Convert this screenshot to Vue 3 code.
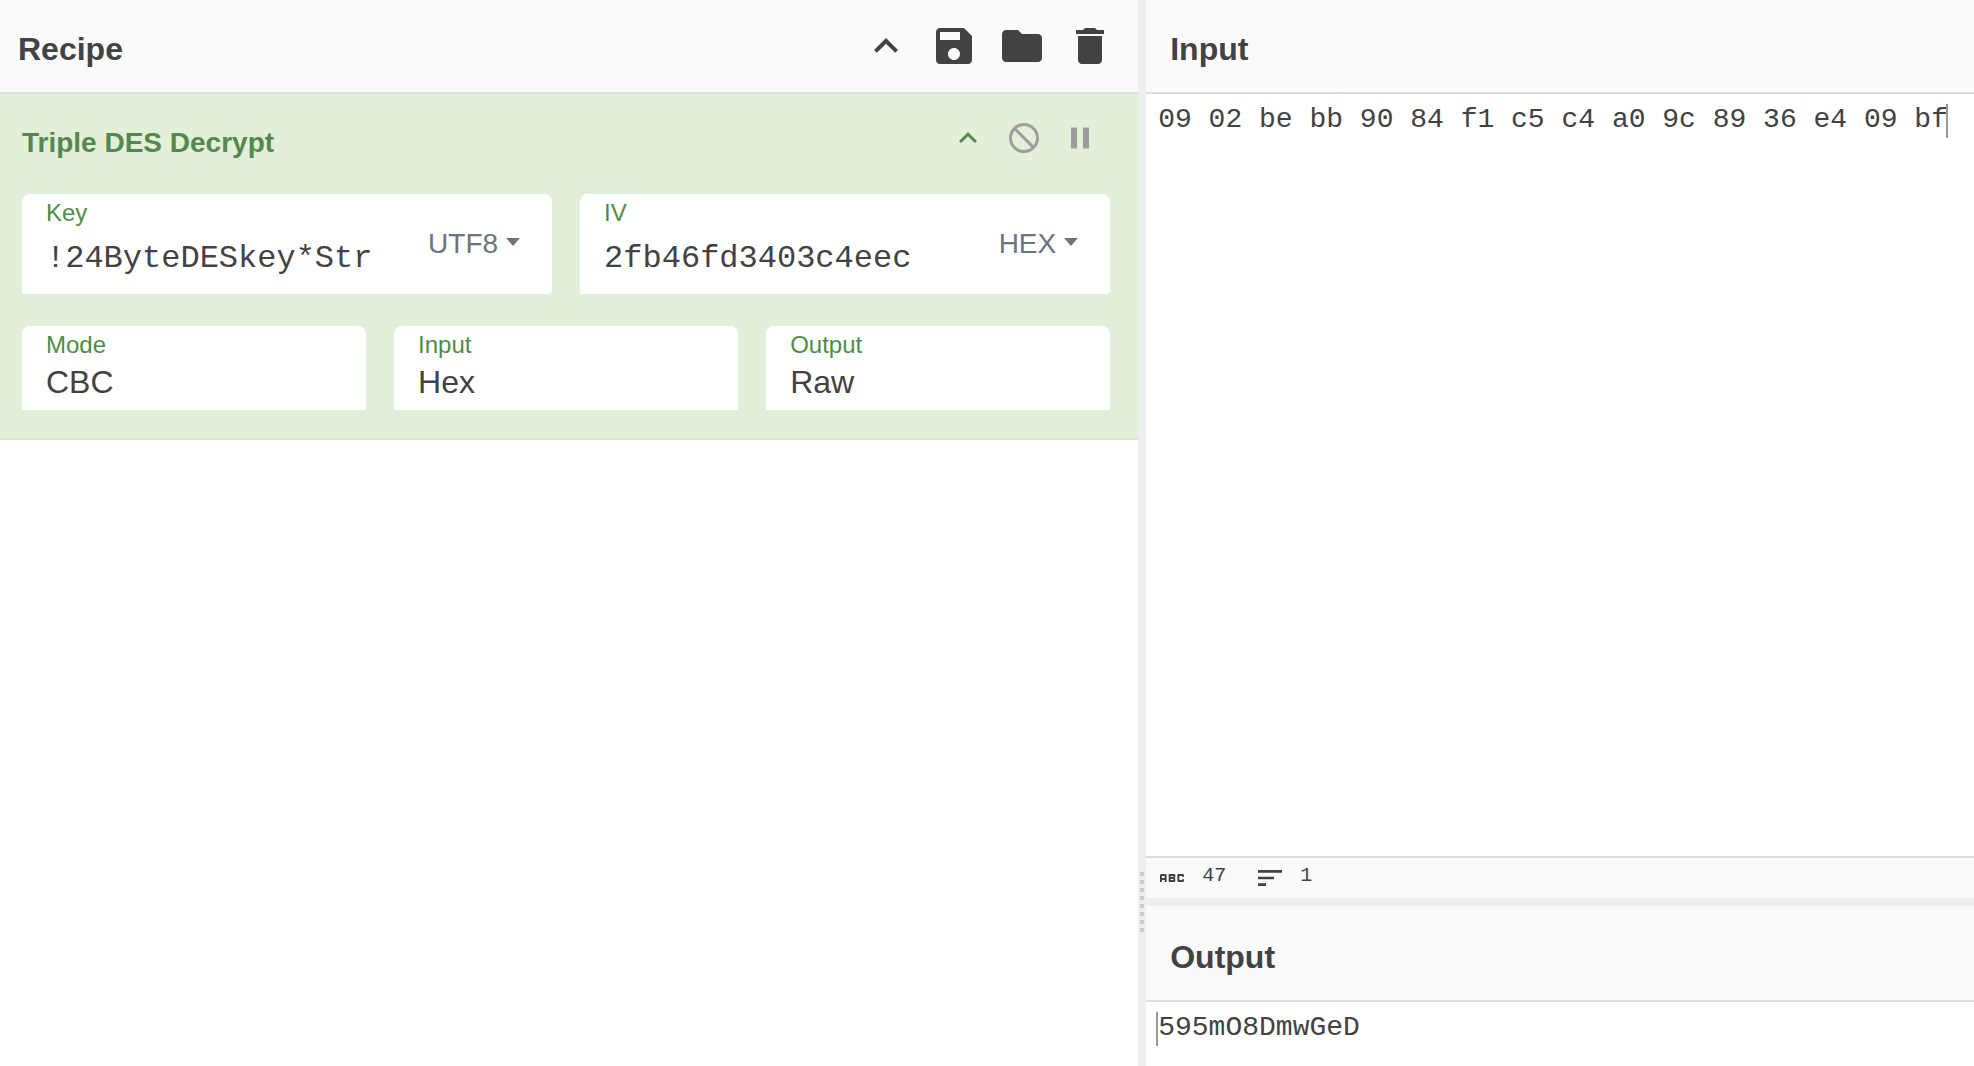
<script setup>
import { ref } from 'vue'

const recipeIcons = [
  { label: 'Hide arguments', d: 'M7.41 15.41 12 10.83l4.59 4.58L18 14l-6-6-6 6z' },
  { label: 'Save recipe', d: 'M17 3H5c-1.11 0-2 .9-2 2v14c0 1.1.89 2 2 2h14c1.1 0 2-.9 2-2V7l-4-4zm-5 16c-1.66 0-3-1.34-3-3s1.34-3 3-3 3 1.34 3 3-1.34 3-3 3zm3-10H5V5h10v4z' },
  { label: 'Load recipe', d: 'M10 4H4c-1.1 0-1.99.9-1.99 2L2 18c0 1.1.9 2 2 2h16c1.1 0 2-.9 2-2V8c0-1.1-.9-2-2-2h-8l-2-2z' },
  { label: 'Clear recipe', d: 'M6 19c0 1.1.9 2 2 2h8c1.1 0 2-.9 2-2V7H6v12zM19 4h-3.5l-1-1h-5l-1 1H5v2h14V4z' },
]

const operationIcons = [
  { label: 'Hide operation arguments', active: true, d: 'M7.41 15.41 12 10.83l4.59 4.58L18 14l-6-6-6 6z' },
  { label: 'Disable operation', d: 'M12 2C6.48 2 2 6.48 2 12s4.48 10 10 10 10-4.48 10-10S17.52 2 12 2zm0 18c-4.42 0-8-3.58-8-8 0-1.85.63-3.55 1.69-4.9L16.9 18.31C15.55 19.37 13.85 20 12 20zm6.31-3.1L7.1 5.69C8.45 4.63 10.15 4 12 4c4.42 0 8 3.58 8 8 0 1.85-.63 3.55-1.69 4.9z' },
  { label: 'Set breakpoint', d: 'M6 19h4V5H6v14zm8-14v14h4V5h-4z' },
]

const textArgs = ref([
  { id: 'key', label: 'Key', value: '!24ByteDESkey*Str', format: 'UTF8' },
  { id: 'iv', label: 'IV', value: '2fb46fd3403c4eec', format: 'HEX' },
])

const selectArgs = ref([
  { id: 'mode', label: 'Mode', value: 'CBC', options: ['CBC', 'ECB'] },
  { id: 'input-format', label: 'Input', value: 'Hex', options: ['Hex', 'Raw'] },
  { id: 'output-format', label: 'Output', value: 'Raw', options: ['Raw', 'Hex'] },
])

const input = ref('09 02 be bb 90 84 f1 c5 c4 a0 9c 89 36 e4 09 bf')
const output = ref('595mO8DmwGeD')

const stats = [
  { label: 'Length', value: 47, d: 'M21 11h-1.5v-.5h-2v3h2V13H21v1c0 .55-.45 1-1 1h-3c-.55 0-1-.45-1-1v-4c0-.55.45-1 1-1h3c.55 0 1 .45 1 1v1zM8 10v5H6.5v-1.5h-2V15H3v-5c0-.55.45-1 1-1h3c.55 0 1 .45 1 1zm-1.5.5h-2V12h2v-1.5zM13.5 12c.55 0 1 .45 1 1v1c0 .55-.45 1-1 1h-4V9h4c.55 0 1 .45 1 1v1c0 .55-.45 1-1 1zM11 10.5v.75h2v-.75h-2zm2 2.25h-2v.75h2v-.75z' },
  { label: 'Lines', value: 1, d: 'M3 18h6v-2H3v2zM3 6v2h18V6H3zm0 7h12v-2H3v2z' },
]
</script>

<template>
  <main class="workspace">
    <section class="recipe">
      <header class="title-bar recipe-title">
        <h2>Recipe</h2>
        <div class="controls">
          <button v-for="icon in recipeIcons" :key="icon.label" type="button" :aria-label="icon.label">
            <svg class="icon-large" viewBox="0 0 24 24" aria-hidden="true"><path :d="icon.d" /></svg>
          </button>
        </div>
      </header>

      <article class="operation">
        <div class="operation-head">
          <h3>Triple DES Decrypt</h3>
          <div class="controls">
            <button
              v-for="icon in operationIcons"
              :key="icon.label"
              type="button"
              :aria-label="icon.label"
              :class="{ active: icon.active }"
            >
              <svg class="icon-medium" viewBox="0 0 24 24" aria-hidden="true"><path :d="icon.d" /></svg>
            </button>
          </div>
        </div>

        <div class="arg-row">
          <div v-for="arg in textArgs" :key="arg.id" class="arg text-arg">
            <div class="field">
              <label :for="arg.id">{{ arg.label }}</label>
              <input :id="arg.id" v-model="arg.value" type="text" spellcheck="false" />
            </div>
            <button type="button" class="format">{{ arg.format }}<span class="caret"></span></button>
          </div>
        </div>

        <div class="arg-row">
          <div v-for="arg in selectArgs" :key="arg.id" class="arg select-arg">
            <label :for="arg.id">{{ arg.label }}</label>
            <select :id="arg.id" v-model="arg.value">
              <option v-for="option in arg.options" :key="option">{{ option }}</option>
            </select>
          </div>
        </div>
      </article>
    </section>

    <div class="gutter gutter-vertical"><span class="grip"></span></div>

    <div class="io">
      <section class="io-input">
        <header class="title-bar io-title"><h2><label for="input-text">Input</label></h2></header>
        <div class="editor">
          <textarea id="input-text" v-model="input" spellcheck="false"></textarea>
          <span class="cursor cursor-end"></span>
        </div>
        <footer class="status">
          <span v-for="stat in stats" :key="stat.label" class="stat" :title="stat.label">
            <svg class="icon-small" viewBox="0 0 24 24" aria-hidden="true"><path :d="stat.d" /></svg>
            <span>{{ stat.value }}</span>
          </span>
        </footer>
      </section>
      <div class="gutter gutter-horizontal"></div>
      <section class="io-output">
        <header class="title-bar io-title"><h2><label for="output-text">Output</label></h2></header>
        <div class="editor">
          <textarea id="output-text" v-model="output" rows="1" readonly spellcheck="false"></textarea>
          <span class="cursor cursor-start"></span>
        </div>
      </section>
    </div>
  </main>
</template>

<style>
body {
  margin: 0;
  background: #fff;
}
</style>

<style scoped>
* {
  box-sizing: border-box;
}

.workspace {
  display: grid;
  grid-template-columns: 11fr 8px 8fr;
  min-height: 100vh;
  color: #424242;
  font-family: "Liberation Sans", Arial, sans-serif;
}

h2,
h3 {
  margin: 0;
  font-weight: bold;
}

button {
  padding: 0;
  border: 0;
  background: none;
  color: inherit;
  font: inherit;
  cursor: pointer;
}

svg {
  display: block;
  fill: currentColor;
}

.icon-large {
  width: 48px;
  height: 48px;
}

.icon-medium {
  width: 36px;
  height: 36px;
}

.icon-small {
  width: 32px;
  height: 32px;
}

.recipe,
.io {
  min-width: 0;
}

.title-bar {
  display: flex;
  align-items: flex-start;
  justify-content: space-between;
  height: 94px;
  padding-top: 22px;
  border-bottom: 2px solid #ddd;
  background: #fafafa;
}

.title-bar h2 {
  padding-top: 8px;
  font-size: 32px;
  line-height: 38px;
}

.recipe-title {
  padding-left: 18px;
  padding-right: 24px;
}

.io-title {
  padding-left: 24px;
}

.controls {
  display: flex;
  gap: 20px;
}

.operation {
  padding: 26px 28px 28px 22px;
  border-bottom: 2px solid #d8e8c4;
  background: #e2efd9;
}

.operation-head {
  display: flex;
  align-items: flex-start;
  justify-content: space-between;
  height: 74px;
  padding-right: 12px;
  color: #558850;
}

.operation-head h3 {
  padding-top: 6px;
  font-size: 28px;
  line-height: 34px;
}

.operation-head button {
  color: #9e9e9e;
}

.operation-head button.active {
  color: #558850;
}

.arg-row {
  display: flex;
  gap: 28px;
}

.arg-row + .arg-row {
  margin-top: 32px;
}

.arg {
  flex: 1;
  min-width: 0;
  padding: 6px 24px 0;
  border-radius: 8px 8px 0 0;
  background: #fff;
}

.arg label {
  display: block;
  color: #4d8d45;
  font-size: 24px;
  line-height: 26px;
}

.text-arg {
  display: flex;
  height: 100px;
  padding: 0 32px 0 24px;
  border-radius: 8px 8px 4px 0;
}

.field {
  flex: 1;
  min-width: 0;
  padding-top: 6px;
}

.arg input,
.arg select {
  display: block;
  width: 100%;
  padding: 0;
  border: 0;
  outline: 0;
  background: none;
  color: inherit;
  font-size: 32px;
}

.arg input {
  height: 64px;
  font-family: "Liberation Mono", "Courier New", monospace;
}

.select-arg {
  height: 84px;
}

.arg select {
  height: 48px;
  appearance: none;
  font-family: inherit;
}

.format {
  display: flex;
  align-items: center;
  gap: 8px;
  color: #6c757d;
  font-size: 28px;
}

.caret {
  margin-bottom: 4px;
  border: 7px solid transparent;
  border-top: 8px solid currentColor;
  border-bottom: 0;
}

.gutter {
  background: #eee;
}

.gutter-vertical {
  display: flex;
  flex-direction: column;
  align-items: center;
  justify-content: flex-end;
  padding-bottom: 134px;
}

.grip {
  width: 4px;
  height: 60px;
  background: repeating-linear-gradient(#ccc 0 4px, transparent 4px 8px);
}

.gutter-horizontal {
  height: 8px;
}

.io {
  display: flex;
  flex-direction: column;
}

.io-input {
  display: flex;
  flex: 1;
  flex-direction: column;
}

.io-output .title-bar {
  height: 96px;
  padding-top: 24px;
}

.editor {
  position: relative;
  display: flex;
  flex: 1;
  font-family: "Liberation Mono", "Courier New", monospace;
  font-size: 28px;
  line-height: 34px;
}

.editor textarea {
  display: block;
  width: 100%;
  padding: 9px 0 21px 12px;
  border: 0;
  outline: 0;
  resize: none;
  overflow: hidden;
  background: #fff;
  color: inherit;
  font: inherit;
}

.cursor {
  position: absolute;
  top: 10px;
  width: 2px;
  height: 34px;
  background: #999;
}

.cursor-start {
  left: 10px;
}

.cursor-end {
  left: calc(10px + 47ch);
}

.status {
  display: flex;
  gap: 28px;
  height: 42px;
  padding: 4px 10px;
  border-top: 2px solid #ddd;
  background: #fafafa;
  font-family: "Liberation Mono", "Courier New", monospace;
  font-size: 20px;
}

.stat {
  display: flex;
  gap: 14px;
  line-height: 28px;
}
</style>
